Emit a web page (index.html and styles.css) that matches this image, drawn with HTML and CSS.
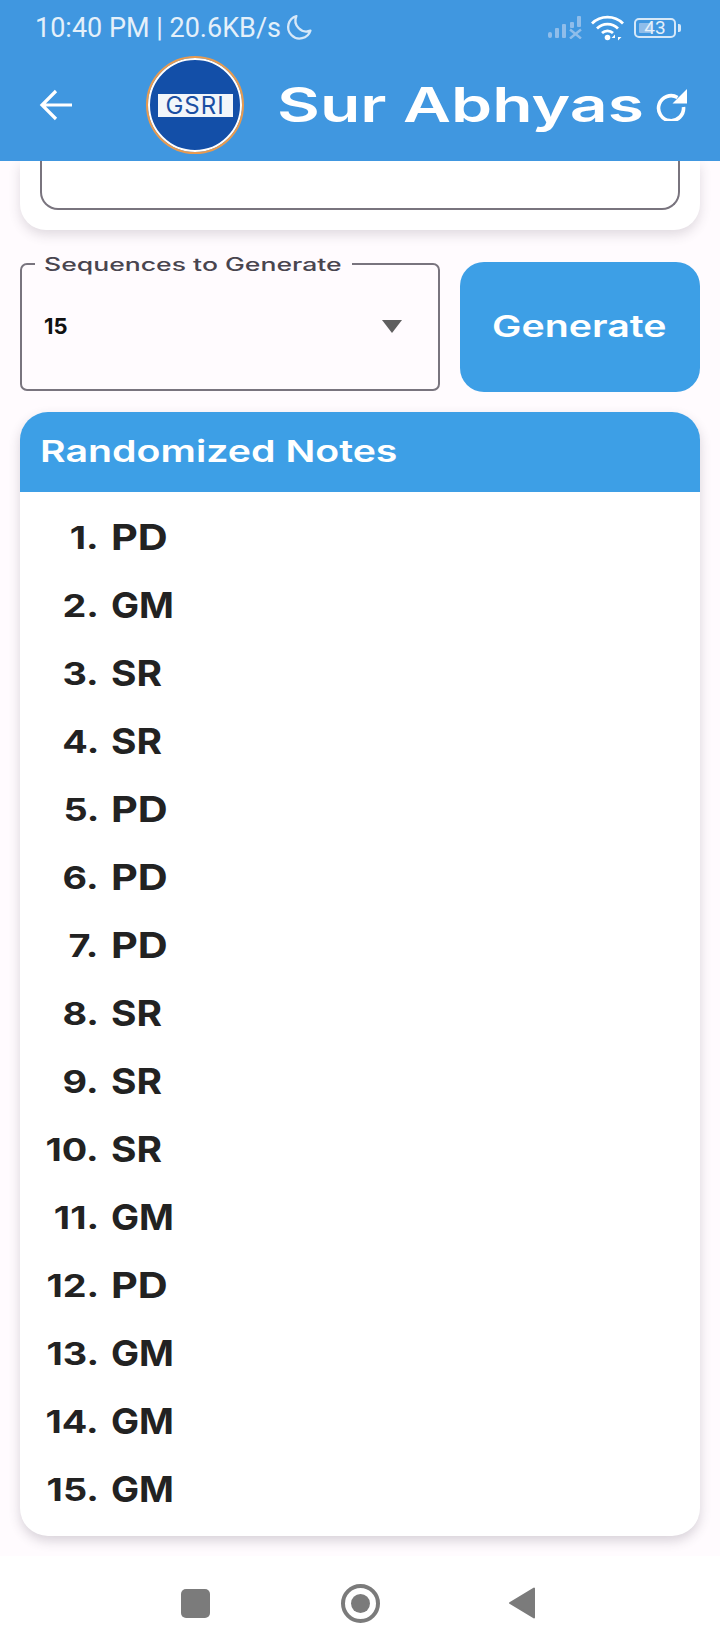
FILE: index.html
```html
<!DOCTYPE html>
<html lang="en">
<head>
<meta charset="utf-8">
<title>Sur Abhyas</title>
<link rel="stylesheet" href="styles.css">
</head>
<body>
<div class="app">
  <header class="appbar">
    <div class="status">
      <div class="status-left">
        <span>10:40 PM | 20.6KB/s</span>
        <svg class="moon" viewBox="0 0 26 26" width="27" height="27"><path d="M11 2a11 11 0 1 0 13.500 14A10.500 10.500 0 0 1 11 2z" fill="none" stroke="#d6e8f8" stroke-width="2.200" stroke-linejoin="round"/></svg>
      </div>
      <div class="status-right">
        <svg class="signal" viewBox="0 0 34 23" width="34" height="23"><g fill="#8fbdea"><rect x="0" y="16" width="4" height="6" rx="2"/><rect x="7" y="12" width="4" height="10" rx="1"/><rect x="14" y="8" width="4" height="14" rx="1"/><rect x="22" y="6" width="4" height="6" rx="1"/><rect x="29" y="0" width="4" height="11" rx="1"/></g><path d="M22 13.500l11 9M33 13.500l-11 9" stroke="#8fbdea" stroke-width="2.400"/></svg>
        <svg class="wifi" viewBox="0 0 33 26" width="33" height="26"><g fill="none" stroke="#fff" stroke-width="2.800"><path d="M1 8.500a22 22 0 0 1 31 0"/><path d="M6 13.500a15 15 0 0 1 21 0"/><path d="M11 18a8 8 0 0 1 11 0"/></g><circle cx="16.500" cy="22.500" r="2.800" fill="#fff"/><path d="M24 25.500v-6l-3.500 3.500h3.500zM27 19.500v6l3.500-3.500H27z" fill="#fff"/></svg>
        <span class="battery"><span class="battery-fill"></span><span class="battery-num">43</span></span>
        <span class="battery-tip"></span>
      </div>
    </div>
    <div class="toolbar">
      <svg class="back" viewBox="0 0 34 32" width="34" height="32"><path d="M33 16H3M17 2L3 16l14 14" fill="none" stroke="#fff" stroke-width="3.200"/></svg>
      <div class="logo"><span class="logo-text">GSRI</span></div>
      <h1 class="title"><span class="wide title-text">Sur Abhyas</span></h1>
      <svg class="refresh" viewBox="0 0 32 32" width="32" height="32"><path d="M22.500 8.500A12.500 12.500 0 1 0 28.500 18" fill="none" stroke="#fff" stroke-width="3.600"/><path d="M32 0V14.500H17.500z" fill="#fff"/></svg>
    </div>
  </header>

  <main class="content">
    <section class="top-card">
      <div class="top-field"></div>
    </section>

    <section class="controls">
      <div class="select">
        <span class="select-label"><span class="wide label-text">Sequences to Generate</span></span>
        <span class="select-value">15</span>
        <span class="select-caret"></span>
      </div>
      <button class="generate"><span class="wide generate-text">Generate</span></button>
    </section>

    <section class="results">
      <h2 class="results-head"><span class="wide head-text">Randomized Notes</span></h2>
      <ol class="notes">
        <li class="note"><span class="num"><span class="num-text">1.</span></span><span class="val val-pd">PD</span></li>
        <li class="note"><span class="num"><span class="num-text">2.</span></span><span class="val val-gm">GM</span></li>
        <li class="note"><span class="num"><span class="num-text">3.</span></span><span class="val val-sr">SR</span></li>
        <li class="note"><span class="num"><span class="num-text">4.</span></span><span class="val val-sr">SR</span></li>
        <li class="note"><span class="num"><span class="num-text">5.</span></span><span class="val val-pd">PD</span></li>
        <li class="note"><span class="num"><span class="num-text">6.</span></span><span class="val val-pd">PD</span></li>
        <li class="note"><span class="num"><span class="num-text">7.</span></span><span class="val val-pd">PD</span></li>
        <li class="note"><span class="num"><span class="num-text">8.</span></span><span class="val val-sr">SR</span></li>
        <li class="note"><span class="num"><span class="num-text">9.</span></span><span class="val val-sr">SR</span></li>
        <li class="note"><span class="num"><span class="num-text">10.</span></span><span class="val val-sr">SR</span></li>
        <li class="note"><span class="num"><span class="num-text">11.</span></span><span class="val val-gm">GM</span></li>
        <li class="note"><span class="num"><span class="num-text">12.</span></span><span class="val val-pd">PD</span></li>
        <li class="note"><span class="num"><span class="num-text">13.</span></span><span class="val val-gm">GM</span></li>
        <li class="note"><span class="num"><span class="num-text">14.</span></span><span class="val val-gm">GM</span></li>
        <li class="note"><span class="num"><span class="num-text">15.</span></span><span class="val val-gm">GM</span></li>
      </ol>
    </section>
  </main>

  <nav class="navbar">
    <span class="nav-square"></span>
    <span class="nav-circle"><span class="nav-dot"></span></span>
    <svg class="nav-back" viewBox="0 0 28 34" width="28" height="34"><path d="M26 2.500v29L2 17z" fill="#7b7b7b" stroke="#7b7b7b" stroke-width="2" stroke-linejoin="round"/></svg>
  </nav>
</div>
</body>
</html>
```
FILE: styles.css
```css
* { box-sizing: border-box; }
html, body { margin: 0; padding: 0; }
body { width: 720px; height: 1650px; overflow: hidden; background: #fffbfe; font-family: Inter, sans-serif; }
.app { display: flex; flex-direction: column; height: 1650px; }
.wide { display: inline-block; transform-origin: left center; white-space: nowrap; }

.appbar { height: 161px; flex: none; background: #4097e0; display: flex; flex-direction: column; position: relative; z-index: 2; }
.status { height: 53px; display: flex; justify-content: space-between; align-items: center; padding: 2px 39px 0 35px; font-family: Roboto, sans-serif; font-size: 27px; color: #e4f0fa; }
.status-left { display: flex; align-items: center; gap: 4px; }
.status-right { display: flex; align-items: center; }
.signal { margin-right: 9px; }
.wifi { margin-right: 10px; }
.battery { width: 42px; height: 20px; border: 2px solid #d6e8f8; border-radius: 5px; position: relative; display: flex; align-items: center; justify-content: center; font-size: 19px; color: #e4f0fa; }
.battery-fill { position: absolute; left: 3px; top: 3px; bottom: 3px; width: 13px; background: #8fbdea; border-radius: 1px; }
.battery-num { position: relative; }
.battery-tip { width: 3px; height: 8px; margin-left: 2px; background: #d6e8f8; border-radius: 0 2px 2px 0; }

.toolbar { flex: 1; display: flex; align-items: center; padding: 0 0 4px 39px; }
.back { flex: none; }
.logo { flex: none; width: 94px; height: 94px; margin-left: 75px; border-radius: 50%; background: #134fa8; border: 2px solid #fff; outline: 2px solid #e79a50; display: flex; align-items: center; justify-content: center; }
.logo-text { background: #f2f6fa; color: #1a4fa3; font-family: Inter, sans-serif; font-size: 24px; letter-spacing: 1px; line-height: 23px; width: 75px; text-align: center; white-space: nowrap; }
.title { margin: 0 0 0 35px; flex: none; width: 378px; font-weight: 600; font-size: 48px; line-height: 56px; color: #fff; }
.title-text { transform: scaleX(1.374); }
.refresh { flex: none; }

.content { flex: 1; display: flex; flex-direction: column; padding: 0 20px; min-height: 0; }
.top-card { height: 69px; flex: none; background: #fff; border-radius: 0 0 26px 26px; padding: 0 20px; box-shadow: 0 5px 12px rgba(60, 50, 70, 0.16); }
.top-field { height: 49px; border: 2px solid #79747e; border-top: none; border-radius: 0 0 18px 18px; }

.controls { display: flex; gap: 20px; margin-top: 32px; height: 130px; flex: none; }
.select { width: 420px; height: 128px; margin-top: 1px; border: 2px solid #79747e; border-radius: 7px; position: relative; display: flex; align-items: center; justify-content: space-between; padding: 0 36px 2px 22px; }
.select-label { position: absolute; left: 13px; top: -11px; width: 317px; padding: 0 9px; background: #fffbfe; font-size: 18px; font-weight: 500; line-height: 22px; color: #49454f; }
.label-text { transform: scaleX(1.476); }
.select-value { font-size: 22px; font-weight: 700; color: #111; }
.select-caret { width: 0; height: 0; border-left: 10px solid transparent; border-right: 10px solid transparent; border-top: 13px solid #5f5f5f; }
.generate { flex: 1; border: none; border-radius: 24px; background: #3d9fe6; color: #fff; font-family: Inter, sans-serif; font-weight: 600; font-size: 30px; padding: 0 0 2px 32px; text-align: left; }
.generate-text { transform: scaleX(1.31); }

.results { margin-top: 20px; background: #fff; border-radius: 28px; box-shadow: 0 5px 12px rgba(60, 50, 70, 0.2); overflow: hidden; flex: none; height: 1124px; }
.results-head { margin: 0; height: 80px; background: #3d9fe6; color: #fff; font-size: 30px; font-weight: 600; line-height: 78px; padding-left: 20px; }
.head-text { transform: scaleX(1.31); }
.notes { list-style: none; margin: 0; padding: 11px 0 0; }
.note { height: 68px; display: flex; align-items: center; color: #222; font-weight: 700; }
.num { width: 79px; text-align: right; font-size: 31px; }
.num-text { display: inline-block; transform: scaleX(1.22); transform-origin: right center; }
.val { display: inline-block; margin-left: 12px; font-size: 36px; transform-origin: left center; }
.val-pd { transform: scaleX(1.15); }
.val-gm { transform: scaleX(1.04); }
.val-sr { transform: scaleX(1.08); }

.navbar { height: 94px; flex: none; margin-top: 20px; background: #fff; display: flex; align-items: center; padding-left: 181px; }
.nav-square { flex: none; width: 29px; height: 29px; border-radius: 5px; background: #7b7b7b; }
.nav-circle { flex: none; width: 39px; height: 39px; margin-left: 131px; border-radius: 50%; border: 4px solid #7b7b7b; display: flex; align-items: center; justify-content: center; }
.nav-dot { width: 19px; height: 19px; border-radius: 50%; background: #7b7b7b; }
.nav-back { flex: none; margin-left: 128px; }
```
